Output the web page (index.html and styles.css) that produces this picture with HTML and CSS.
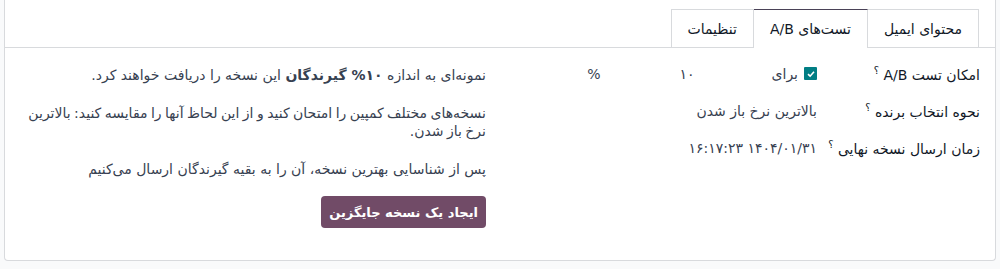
FILE: index.html
```html
<!DOCTYPE html>
<html lang="fa" dir="rtl">
<head>
    <meta charset="UTF-8">
    <title>A/B</title>
    <link rel="stylesheet" href="styles.css">
</head>
<body>
    <div class="sheet">
        <ul class="tabs">
            <li class="tab">محتوای ایمیل</li>
            <li class="tab active">تست‌های A/B</li>
            <li class="tab">تنظیمات</li>
        </ul>
        <div class="pane">
            <div class="group">
                <div class="row">
                    <div class="label">امکان تست A/B <sup>؟</sup></div>
                    <div class="value">
                        <span class="check"><svg width="8" height="8" viewBox="0 0 8 8"><path d="M1 4.2 L3.1 6.2 L7 1.8" fill="none" stroke="#fff" stroke-width="1.6"/></svg></span>
                        <span class="for">برای</span>
                        <span class="num">۱۰</span>
                        <span class="pct">%</span>
                    </div>
                </div>
                <div class="row">
                    <div class="label">نحوه انتخاب برنده <sup>؟</sup></div>
                    <div class="value">بالاترین نرخ باز شدن</div>
                </div>
                <div class="row">
                    <div class="label">زمان ارسال نسخه نهایی <sup>؟</sup></div>
                    <div class="value">۱۴۰۴/۰۱/۳۱ ۱۶:۱۷:۲۳</div>
                </div>
            </div>
            <div class="info">
                <p>نمونه‌ای به اندازه <b>۱۰% گیرندگان</b> این نسخه را دریافت خواهند کرد.</p>
                <p class="tight">نسخه‌های مختلف کمپین را امتحان کنید و از این لحاظ آنها را مقایسه کنید: بالاترین نرخ باز شدن.</p>
                <p>پس از شناسایی بهترین نسخه، آن را به بقیه گیرندگان ارسال می‌کنیم</p>
                <button class="btn">ایجاد یک نسخه جایگزین</button>
            </div>
        </div>
    </div>
</body>
</html>
```

FILE: styles.css
```css
body {
    margin: 0;
    background-color: #f9fafb;
    font-family: "DejaVu Sans", "Noto Sans", sans-serif;
    font-size: 14px;
    color: #374151;
}
.sheet {
    margin: 0 4px 0 4px;
    height: 260px;
    background-color: #fff;
    border: 1px solid #d8dadd;
    border-top: none;
    border-radius: 0 0 4px 4px;
}
.tabs {
    display: flex;
    margin: 0;
    padding: 9px 16px 0 0;
    list-style: none;
    border-bottom: 1px solid #d8dadd;
}
.tab {
    height: 37px;
    padding: 0 16px;
    display: flex;
    align-items: center;
    border: 1px solid #d8dadd;
    border-bottom: none;
    margin-bottom: -1px;
    margin-left: -1px;
    background-color: #fff;
    color: #111827;
}
.tab.active {
    border-top: 1px solid #4a4257;
    height: 38px;
}
.pane {
    display: flex;
    padding: 7px 15px 0 0;
}
.group {
    width: 494px;
}
.row {
    display: flex;
    align-items: center;
    min-height: 37px;
}
.label {
    width: 163px;
    color: #111827;
}
.label sup {
    font-size: 10px;
}
.value {
    display: flex;
    align-items: center;
    color: #374151;
}
.check {
    width: 13px;
    height: 13px;
    border-radius: 1px;
    background-color: #017e84;
    display: flex;
    justify-content: center;
    align-items: center;
    margin-left: 6px;
}
.for {
    margin-left: 77px;
}
.num {
    margin-left: 79px;
}
.info {
    flex: 1;
    padding-top: 11px;
}
.info p {
    margin: 0 0 20px 0;
    line-height: 18px;
}
.info p.tight {
    word-spacing: -1px;
}
.btn {
    margin-top: -2px;
    padding: 0 8px;
    height: 32px;
    background-color: #714b67;
    color: #fff;
    border: none;
    border-radius: 4px;
    font-family: inherit;
    font-size: 13px;
    font-weight: bold;
}
```
